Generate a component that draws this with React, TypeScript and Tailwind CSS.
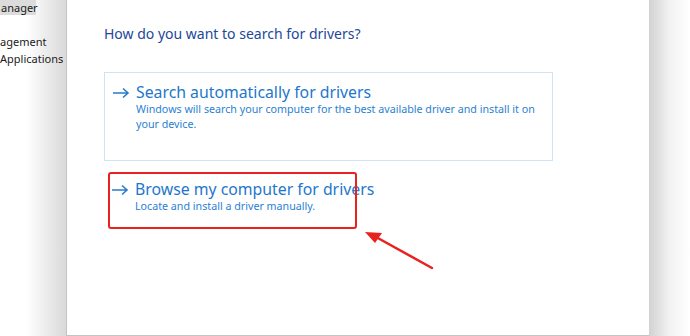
const font = { fontFamily: '"Noto Sans", "Open Sans", sans-serif' };

function Arrow() {
  return (
    <svg width="18" height="12" viewBox="0 0 18 12" className="shrink-0">
      <path d="M1 6 H16 M11 1.5 L16 6 L11 10.5" fill="none" stroke="#2a7bcf" strokeWidth="1.6" />
    </svg>
  );
}

function Option({ title, sub }: { title: string; sub: string }) {
  return (
    <div className="flex items-start gap-[6px] pl-[7px]">
      <div className="pt-[4px]">
        <Arrow />
      </div>
      <div>
        <div className="text-[15.8px] leading-[19px] text-[#1d77cc]">{title}</div>
        <div className="text-[10.7px] leading-[15px] text-[#2b7fd2]">{sub}</div>
      </div>
    </div>
  );
}

export default function App() {
  return (
    <div className="relative flex h-[336px] w-[690px] overflow-hidden bg-white" style={font}>
      {/* background window behind the dialog */}
      <div className="w-[66px] shrink-0 bg-gradient-to-r from-white from-40% to-[#d9d9d9] text-[11px] leading-[16px] text-[#1a1a1a]">
        <div className="w-[36px] bg-[#dcdcdc] pl-[1px] leading-[15px] whitespace-nowrap">anager</div>
        <div className="mt-[19px] whitespace-nowrap">agement</div>
        <div className="mt-[1px] whitespace-nowrap">Applications</div>
      </div>

      {/* dialog */}
      <div className="relative h-[336px] w-[583px] shrink-0 border-l border-b border-[#c4c4c4] bg-white pl-[37px]">
        <div className="pt-[24px] text-[14px] leading-[20px] text-[#23489a]">
          How do you want to search for drivers?
        </div>

        <div className="mt-[28px] h-[89px] w-[449px] border border-[#cfe3f5] pt-[10px]">
          <div className="pr-[8px]">
            <Option
              title="Search automatically for drivers"
              sub="Windows will search your computer for the best available driver and install it on your device."
            />
          </div>
        </div>

        <div className="mt-[19px] w-[449px]">
          <Option title="Browse my computer for drivers" sub="Locate and install a driver manually." />
        </div>

        {/* annotation */}
        <div className="absolute left-[41px] top-[172px] h-[57px] w-[249px] rounded-[3px] border-2 border-[#e8221f]" />
        <svg className="absolute left-[295px] top-[226px]" width="80" height="45" viewBox="0 0 80 45">
          <path d="M70 42 L14 11" stroke="#e8221f" strokeWidth="2.5" strokeLinecap="round" />
          <path d="M3 6 L20 7 L13 17 Z" fill="#e8221f" />
        </svg>
      </div>

      {/* shadow on the right */}
      <div className="flex-1 bg-gradient-to-r from-[#d2d2d2] via-[#f2f2f2] to-white" />
    </div>
  );
}
